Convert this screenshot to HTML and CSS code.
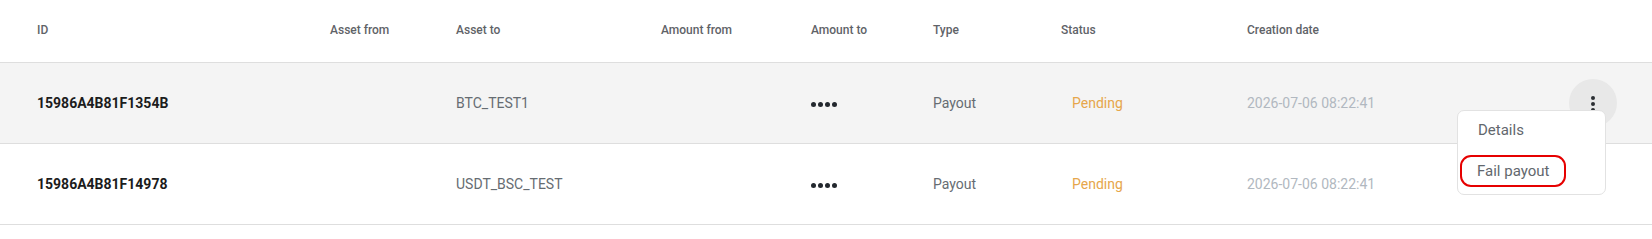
FILE: index.html
```html
<!DOCTYPE html>
<html lang="en">
<head>
    <meta charset="UTF-8">
    <meta name="viewport" content="width=device-width, initial-scale=1.0">
    <title>Transactions</title>
    <link rel="stylesheet" href="styles.css">
</head>
<body>
    <div class="table">
        <div class="row head">
            <div class="cell">ID</div>
            <div class="cell">Asset from</div>
            <div class="cell">Asset to</div>
            <div class="cell">Amount from</div>
            <div class="cell">Amount to</div>
            <div class="cell">Type</div>
            <div class="cell">Status</div>
            <div class="cell">Creation date</div>
            <div class="cell"></div>
        </div>

        <div class="row active">
            <div class="cell id">15986A4B81F1354B</div>
            <div class="cell"></div>
            <div class="cell muted">BTC_TEST1</div>
            <div class="cell"></div>
            <div class="cell"><span class="dots"><i></i><i></i><i></i><i></i></span></div>
            <div class="cell muted">Payout</div>
            <div class="cell"><span class="status">Pending</span></div>
            <div class="cell date">2026-07-06 08:22:41</div>
            <div class="cell actions">
                <button class="kebab"><span></span><span></span><span></span></button>
                <div class="menu">
                    <div class="menu-item">Details</div>
                    <div class="menu-item marked">Fail payout</div>
                </div>
            </div>
        </div>

        <div class="row">
            <div class="cell id">15986A4B81F14978</div>
            <div class="cell"></div>
            <div class="cell muted">USDT_BSC_TEST</div>
            <div class="cell"></div>
            <div class="cell"><span class="dots"><i></i><i></i><i></i><i></i></span></div>
            <div class="cell muted">Payout</div>
            <div class="cell"><span class="status">Pending</span></div>
            <div class="cell date">2026-07-06 08:22:41</div>
            <div class="cell actions"></div>
        </div>
    </div>
</body>
</html>
```

FILE: styles.css
```css
body {
    margin: 0;
    font-family: 'Roboto', 'Liberation Sans', sans-serif;
    background-color: #fff;
    color: #222;
}

.table {
    width: 100%;
}

.row {
    display: grid;
    grid-template-columns: 293px 126px 205px 150px 122px 128px 186px 1fr 48px;
    align-items: center;
    height: 80px;
    padding: 0 35px 0 37px;
    border-bottom: 1px solid #dedede;
}

.row.head {
    box-sizing: border-box;
    height: 63px;
    align-items: start;
    padding-top: 21px;
}

.row.head .cell {
    font-size: 12px;
    font-weight: 500;
    color: #5f6368;
}

.row.active {
    background-color: #f4f4f4;
}

.cell {
    font-size: 14px;
    line-height: 18px;
}

.id {
    font-weight: 700;
    color: #1c1c1c;
}

.muted {
    color: #666c72;
}

.date {
    color: #b1b8c0;
}

.status {
    padding-left: 11px;
    color: #e6a64b;
}

.dots {
    display: flex;
    gap: 2px;
    padding-top: 2px;
}

.dots i {
    width: 5px;
    height: 5px;
    border-radius: 50%;
    background-color: #23282e;
}

.actions {
    position: relative;
    height: 48px;
}

.kebab {
    width: 48px;
    height: 48px;
    border: none;
    border-radius: 50%;
    background-color: #e8e8e8;
    display: flex;
    flex-direction: column;
    align-items: center;
    justify-content: center;
    gap: 2px;
    padding: 2px 0 0;
}

.kebab span {
    width: 4px;
    height: 4px;
    border-radius: 50%;
    background-color: #2b2f33;
}

.menu {
    position: absolute;
    top: 31px;
    right: 11px;
    width: 147px;
    padding: 0 0 7px;
    background-color: #fff;
    border: 1px solid #e2e2e2;
    border-radius: 7px;
    z-index: 2;
}

.menu-item {
    padding: 0 20px;
    height: 38px;
    line-height: 38px;
    font-size: 15px;
    color: #62676d;
    white-space: nowrap;
}

.menu-item.marked {
    width: fit-content;
    margin: 6px 0 0 2px;
    padding: 0 15px;
    height: 28px;
    line-height: 28px;
    border: 2.5px solid #e60000;
    border-radius: 11px;
}
```
